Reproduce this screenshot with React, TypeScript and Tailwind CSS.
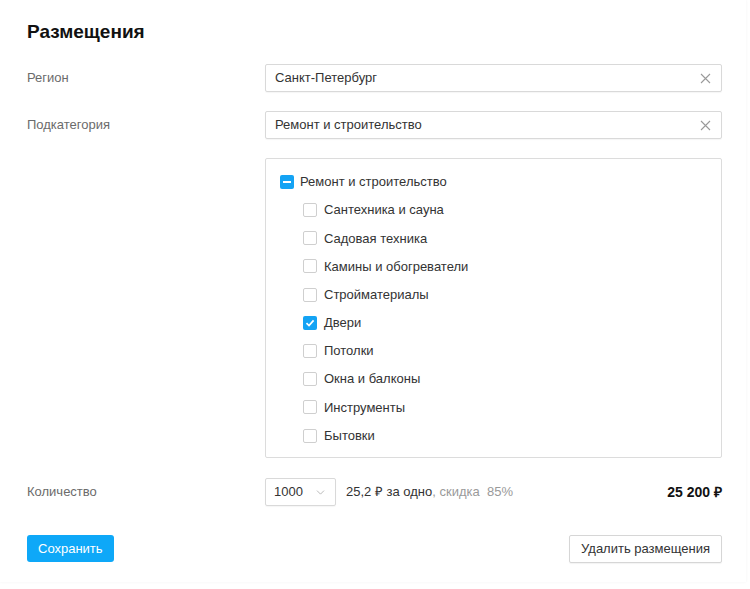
import { useState } from 'react';
import { ChevronDown } from 'lucide-react';

const subcategories = [
  'Сантехника и сауна',
  'Садовая техника',
  'Камины и обогреватели',
  'Стройматериалы',
  'Двери',
  'Потолки',
  'Окна и балконы',
  'Инструменты',
  'Бытовки',
];

export default function App() {
  const [checked, setChecked] = useState<string[]>(['Двери']);

  const toggle = (name: string) => {
    setChecked(checked.includes(name) ? checked.filter((c) => c !== name) : [...checked, name]);
  };

  return (
    <div
      className="w-[750px] h-[589px] bg-white text-[13px] text-[#333]"
      style={{ fontFamily: '"Liberation Sans", Arial, sans-serif' }}
    >
      <div className="w-[746px] h-[582px] bg-white shadow-[0_0_3px_rgba(0,0,0,0.05)] pt-[20px] pl-[27px] pr-[24px]">
        <h1 className="text-[19px] leading-[24px] font-bold text-[#111]">Размещения</h1>

        {/* Region */}
        <Row label="Регион" className="mt-[20px]">
          <ClearInput value="Санкт-Петербург" />
        </Row>

        {/* Subcategory */}
        <Row label="Подкатегория" className="mt-[19px]">
          <ClearInput value="Ремонт и строительство" />
        </Row>

        {/* Tree */}
        <div className="mt-[19px] ml-[238px] w-[457px] h-[300px] border border-[#dcdcdc] rounded-[2px] pt-[9px] pl-[14px]">
          <div className="flex items-center h-[28px]">
            <span className="w-[14px] h-[14px] shrink-0 rounded-[2px] bg-[#14a3f4] flex items-center justify-center">
              <span className="w-[8px] h-[2px] bg-white" />
            </span>
            <span className="ml-[6px]">Ремонт и строительство</span>
          </div>
          {subcategories.map((name) => (
            <label key={name} className="flex items-center h-[28.2px] pl-[23px] cursor-pointer" onClick={() => toggle(name)}>
              <Checkbox on={checked.includes(name)} />
              <span className="ml-[7px]">{name}</span>
            </label>
          ))}
        </div>

        {/* Quantity */}
        <Row label="Количество" className="mt-[20px]">
          <div className="flex items-center w-[457px] shrink-0">
            <div className="w-[71px] h-[28px] border border-[#d9d9d9] rounded-[2px] flex items-center justify-between pl-[8px] pr-[8px] shadow-[0_1px_1px_rgba(0,0,0,0.04)]">
              <span>1000</span>
              <ChevronDown size={13} strokeWidth={1.5} className="text-[#aaa]" />
            </div>
            <span className="ml-[10px]">25,2 ₽ за одно</span>
            <span className="text-[#9a9a9a]">, скидка&nbsp; 85%</span>
            <span className="ml-auto text-[14px] font-bold text-[#111]">25 200 ₽</span>
          </div>
        </Row>

        {/* Actions */}
        <div className="mt-[29px] flex justify-between w-[695px]">
          <button className="h-[27px] px-[11px] rounded-[3px] bg-[#0ea8f8] text-white font-medium">Сохранить</button>
          <button className="h-[28px] px-[11px] rounded-[2px] border border-[#d6d6d6] bg-white text-[#333] shadow-[0_1px_1px_rgba(0,0,0,0.05)]">
            Удалить размещения
          </button>
        </div>
      </div>
    </div>
  );
}

function Row({ label, className, children }: { label: string; className?: string; children: React.ReactNode }) {
  return (
    <div className={`flex items-center ${className ?? ''}`}>
      <div className="w-[238px] shrink-0 text-[#6b6b6b]">{label}</div>
      {children}
    </div>
  );
}

function ClearInput({ value }: { value: string }) {
  return (
    <div className="w-[457px] shrink-0 h-[28px] border border-[#d9d9d9] rounded-[2px] flex items-center pl-[9px] pr-[10px] shadow-[0_1px_1px_rgba(0,0,0,0.04)]">
      <span className="flex-1">{value}</span>
      <svg width="11" height="11" viewBox="0 0 11 11" className="text-[#9a9a9a]">
        <path d="M1 1L10 10M10 1L1 10" stroke="currentColor" strokeWidth="1.1" />
      </svg>
    </div>
  );
}

function Checkbox({ on }: { on: boolean }) {
  if (on) {
    return (
      <span className="w-[14px] h-[14px] shrink-0 rounded-[2px] bg-[#14a3f4] flex items-center justify-center">
        <svg width="10" height="10" viewBox="0 0 10 10">
          <path d="M1.5 5.2L4 7.6L8.6 2.4" stroke="white" strokeWidth="1.7" fill="none" />
        </svg>
      </span>
    );
  }
  return <span className="w-[14px] h-[14px] shrink-0 rounded-[2px] border border-[#cfcfcf] bg-white" />;
}
